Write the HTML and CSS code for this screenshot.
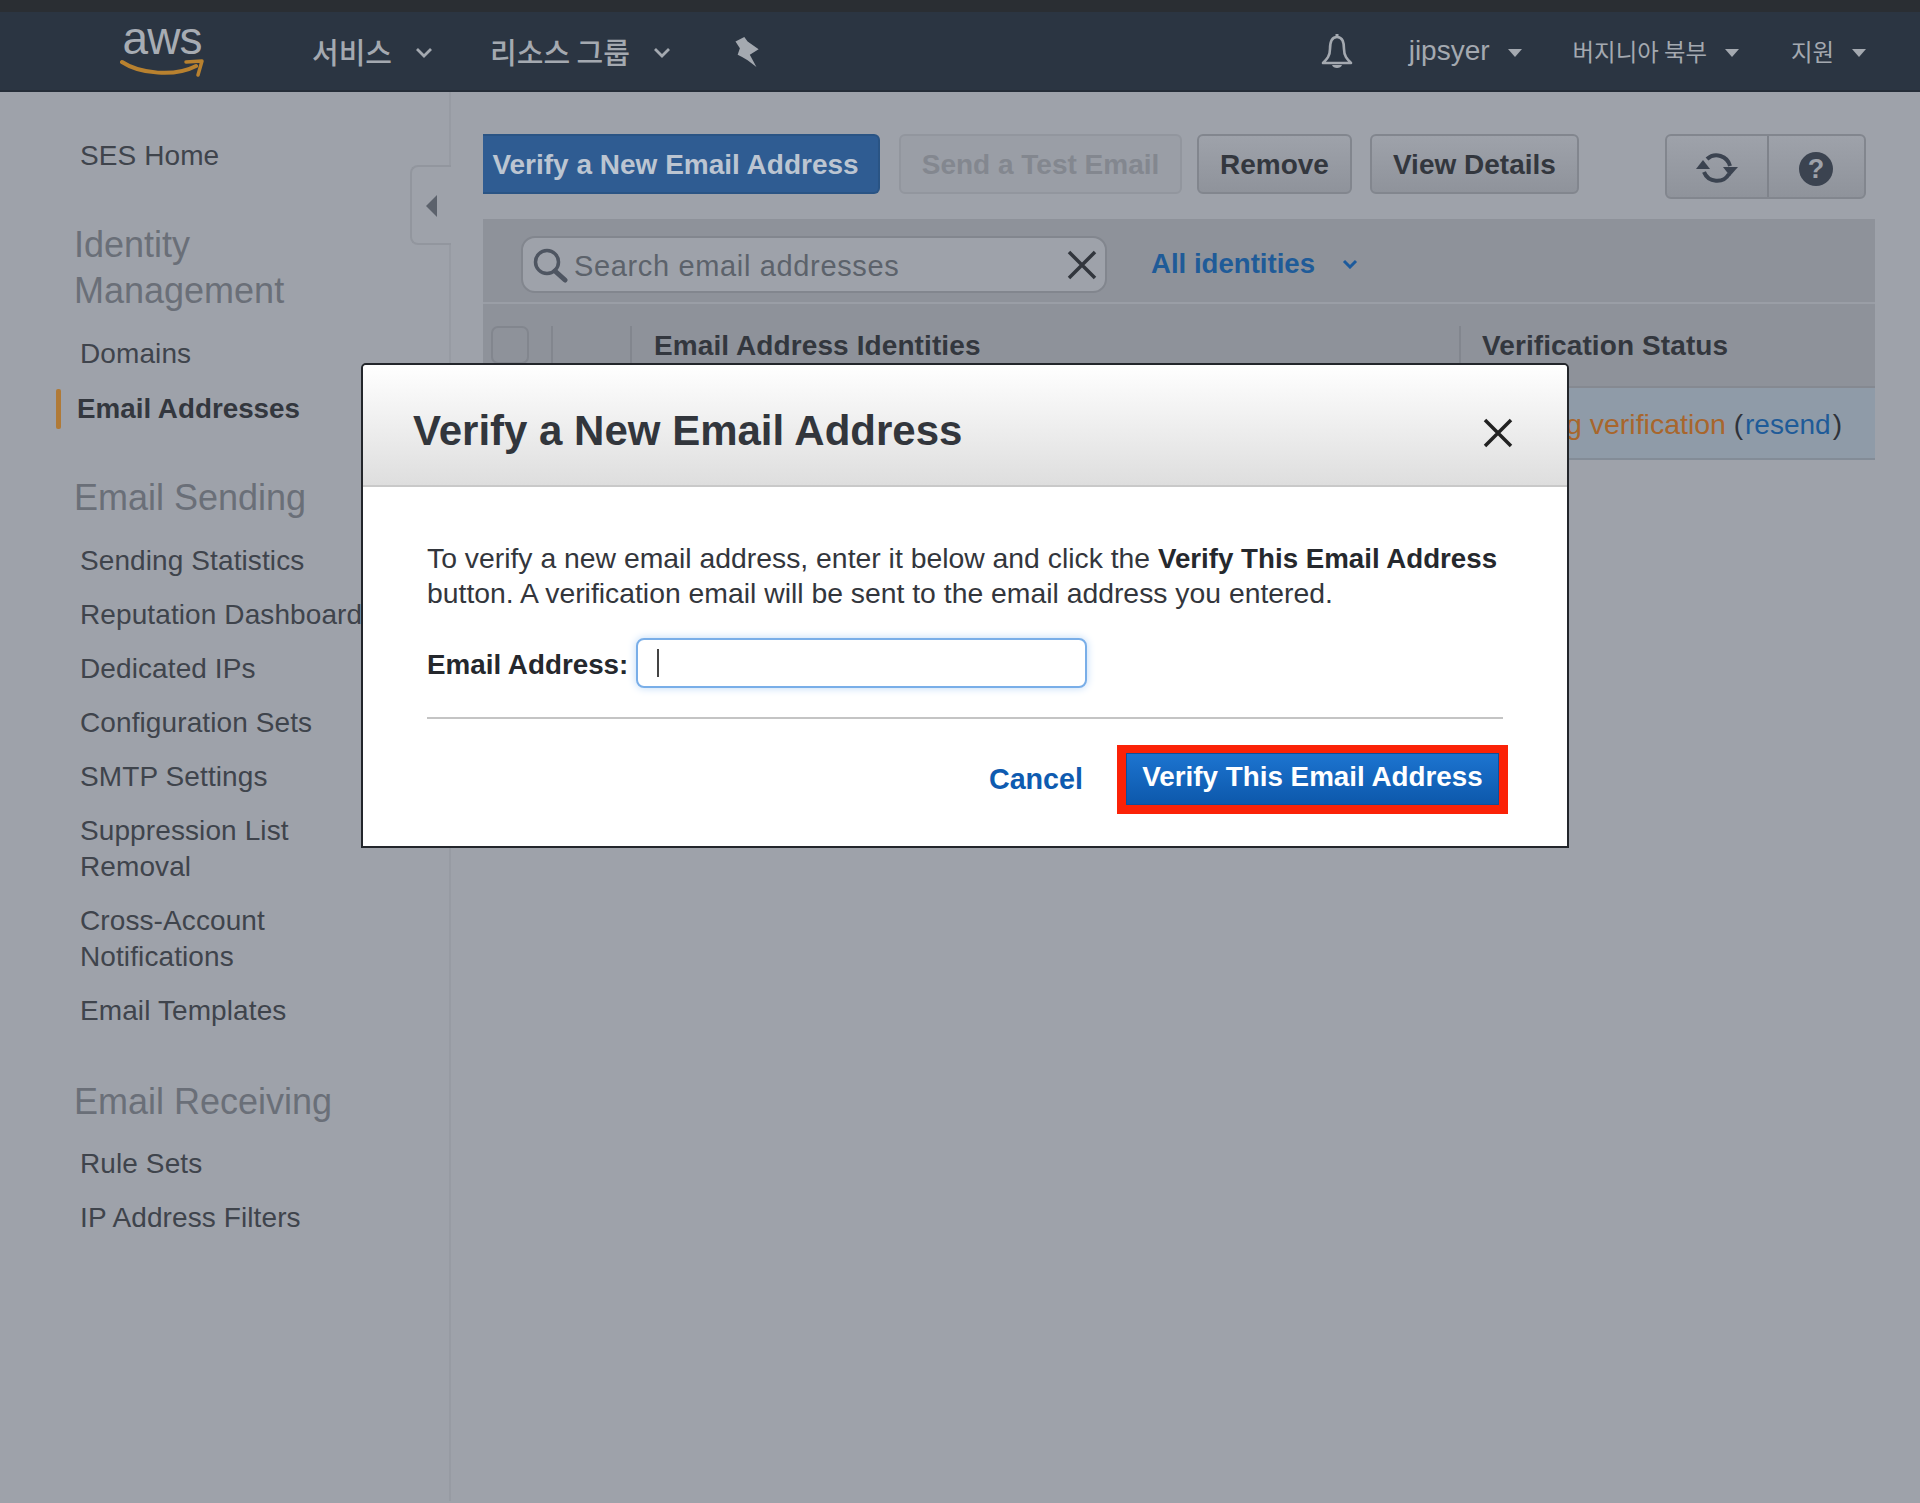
FILE: index.html
```html
<!DOCTYPE html>
<html lang="en">
<head>
<meta charset="utf-8">
<title>Verify a New Email Address</title>
<link rel="stylesheet" href="styles.css">
</head>
<body>
<div class="strip"></div>
<header class="topbar">
  <div class="logo">
    <span class="logo-text">aws</span>
    <svg class="smile" viewBox="0 0 84 20" width="84" height="20"><path d="M2 3C20 15 55 18 76 7" fill="none" stroke="#b8812f" stroke-width="4" stroke-linecap="round"/><path d="M66 3L82 2L78 16" fill="none" stroke="#b8812f" stroke-width="3.5" stroke-linejoin="round" stroke-linecap="round"/></svg>
  </div>
  <nav class="nav-left">
    <a class="nav-item nav-ko">서비스<svg class="chev" viewBox="0 0 18 11" width="18" height="11"><path d="M2 2L9 9L16 2" fill="none" stroke="#a4a9b0" stroke-width="2.8"/></svg></a>
    <a class="nav-item nav-ko">리소스 그룹<svg class="chev" viewBox="0 0 18 11" width="18" height="11"><path d="M2 2L9 9L16 2" fill="none" stroke="#a4a9b0" stroke-width="2.8"/></svg></a>
    <svg class="pin" viewBox="0 0 24 29" width="27" height="32"><path d="M2 5L10 1L13 5L23 12L15 17L21 28L13 22L8 19L4 17L6 11Z" fill="#a4a9b0"/></svg>
  </nav>
  <nav class="nav-right">
    <svg class="bell" viewBox="0 0 36 38" width="36" height="38"><path d="M18 5C12 5 11 11 11 17C11 24 8 27 4 31H32C28 27 25 24 25 17C25 11 24 5 18 5Z" fill="none" stroke="#a4a9b0" stroke-width="2.6" stroke-linejoin="round"/><path d="M18 2V5" stroke="#a4a9b0" stroke-width="3"/><path d="M13 33C14 37 22 37 23 33Z" fill="#a4a9b0"/></svg>
    <a class="nav-item nav-small nav-user">jipsyer<i class="caret"></i></a>
    <a class="nav-item nav-small nav-ko-s">버지니아 북부<i class="caret"></i></a>
    <a class="nav-item nav-small nav-ko-s">지원<i class="caret"></i></a>
  </nav>
</header>
<div class="layout">
  <aside class="sidebar">
    <a class="side-link first">SES Home</a>
    <h3 class="side-head">Identity Management</h3>
    <a class="side-link domains">Domains</a>
    <a class="side-link active">Email Addresses</a>
    <h3 class="side-head h-send">Email Sending</h3>
    <a class="side-link">Sending Statistics</a>
    <a class="side-link nowrap">Reputation Dashboard</a>
    <a class="side-link">Dedicated IPs</a>
    <a class="side-link">Configuration Sets</a>
    <a class="side-link">SMTP Settings</a>
    <a class="side-link">Suppression List Removal</a>
    <a class="side-link">Cross-Account Notifications</a>
    <a class="side-link">Email Templates</a>
    <h3 class="side-head h-recv">Email Receiving</h3>
    <a class="side-link">Rule Sets</a>
    <a class="side-link">IP Address Filters</a>
    <div class="collapse"><i class="collapse-arrow"></i></div>
  </aside>
  <main class="content">
    <div class="toolbar">
      <button class="btn btn-primary">Verify a New Email Address</button>
      <button class="btn btn-disabled">Send a Test Email</button>
      <button class="btn">Remove</button>
      <button class="btn">View Details</button>
      <div class="icon-group">
        <span class="icon-btn icon-refresh"><svg viewBox="0 0 44 38" width="44" height="38"><path d="M12 9A14 14 0 0 1 35 16M34 24A14 14 0 0 1 9 22" fill="none" stroke="#3b4350" stroke-width="4"/><path d="M1 19L8 10L15 19Z" fill="#3b4350"/><path d="M28 17L43 17L35 26Z" fill="#3b4350"/></svg></span>
        <span class="icon-btn icon-help"><svg viewBox="0 0 36 36" width="36" height="36"><circle cx="18" cy="18" r="17" fill="#3b4350"/><text x="18" y="27" class="help-mark">?</text></svg></span>
      </div>
    </div>
    <section class="panel">
      <div class="filter-row">
        <div class="search">
          <svg class="search-ico" viewBox="0 0 36 36" width="36" height="36"><circle cx="15" cy="15" r="11.500" fill="none" stroke="#4e5561" stroke-width="3.500"/><path d="M23 24L33 33" stroke="#4e5561" stroke-width="5" stroke-linecap="round"/></svg>
          <span class="search-ph">Search email addresses</span>
          <svg class="search-x" viewBox="0 0 30 30" width="30" height="30"><path d="M2 2L28 28M28 2L2 28" stroke="#32363d" stroke-width="3.500"/></svg>
        </div>
        <a class="filter-link">All identities<svg viewBox="0 0 16 10" width="16" height="10"><path d="M2 2L8 8L14 2" fill="none" stroke="#1c5a9c" stroke-width="3"/></svg></a>
      </div>
      <div class="thead">
        <span class="check"></span>
        <span class="th-blank"></span>
        <span class="th th-email">Email Address Identities</span>
        <span class="th th-status">Verification Status</span>
      </div>
      <div class="trow">
        <span class="status"><span class="pending">pending verification</span> (<a class="resend">resend</a>)</span>
      </div>
    </section>
  </main>
</div>
<div class="modal">
  <div class="modal-head">
    <h2 class="modal-title">Verify a New Email Address</h2>
    <svg class="modal-x" viewBox="0 0 30 30" width="30" height="30"><path d="M2 2L28 28M28 2L2 28" stroke="#222" stroke-width="3.500"/></svg>
  </div>
  <div class="modal-body">
    <p class="modal-text">To verify a new email address, enter it below and click the <b>Verify This Email Address</b> button. A verification email will be sent to the email address you entered.</p>
    <div class="field">
      <label class="field-label">Email Address:</label>
      <div class="field-input"><i class="cursor"></i></div>
    </div>
    <div class="modal-foot">
      <a class="cancel">Cancel</a>
      <span class="highlight"><button class="verify">Verify This Email Address</button></span>
    </div>
  </div>
</div>
</body>
</html>
```
FILE: styles.css
```css
* { box-sizing: border-box; }
html, body { margin: 0; padding: 0; }
body {
  width: 1920px;
  height: 1503px;
  overflow: hidden;
  position: relative;
  background: #9ea2aa;
  font-family: "Liberation Sans", Arial, sans-serif;
  color: #33373e;
}
.strip { height: 12px; background: #2a2e33; }
.topbar {
  height: 80px;
  background: #2b3542;
  border-bottom: 2px solid #252d38;
  display: flex;
  align-items: center;
  justify-content: space-between;
  padding: 0 54px 0 120px;
  color: #a4a9b0;
}
.logo { width: 84px; height: 62px; display: flex; flex-direction: column; align-items: center; }
.logo-text { font-size: 46px; line-height: 36px; letter-spacing: -1px; color: #a7acb3; }
.smile { margin-top: 3px; }
.nav-left { display: flex; align-items: center; margin-left: 108px; flex: 1; }
.nav-right { display: flex; align-items: center; }
.nav-item { display: flex; align-items: center; font-weight: 400; white-space: nowrap; }
.nav-ko { font-family: "Noto Sans CJK KR", sans-serif; font-size: 29px; font-weight: 500; margin-right: 57px; line-height: 1; }
.chev { margin-left: 23px; margin-top: 3px; }
.pin { margin-left: 5px; margin-top: 2px; }
.bell { margin-right: 54px; }
.nav-small { font-size: 28px; }
.nav-user { margin-right: 51px; }
.nav-ko-s { font-family: "Noto Sans CJK KR", sans-serif; font-size: 23.4px; margin-right: 52px; }
.nav-ko-s:last-child { margin-right: 0; }
.caret { width: 0; height: 0; border-left: 7px solid transparent; border-right: 7px solid transparent; border-top: 8px solid #a4a9b0; margin-left: 18px; margin-top: 3px; }
.layout { display: flex; height: 1409px; }
.sidebar {
  width: 451px;
  flex: none;
  border-right: 2px solid #979ba3;
  padding: 46px 0 0 80px;
  position: relative;
  display: flex;
  flex-direction: column;
  align-items: flex-start;
}
.side-link { font-size: 28px; letter-spacing: .1px; line-height: 36px; color: #3f444c; margin-bottom: 18px; width: 240px; }
.side-link.first { margin-bottom: 0; }
.side-link.domains { margin-bottom: 19px; }
.side-link.nowrap { white-space: nowrap; width: auto; }
.side-link.active { font-size: 27.8px; font-weight: 700; letter-spacing: 0; margin-left: -3px; color: #33373e; position: relative; white-space: nowrap; width: auto; }
.side-link.active::before { content: ""; position: absolute; left: -21px; top: -2px; width: 5px; height: 40px; background: #b07a37; border-radius: 2px; }
.side-head { font-size: 36px; line-height: 46px; font-weight: 400; color: #6a6f78; margin: 48px 0 22px -6px; width: 290px; }
.h-send { margin: 30px 0 22px -6px; }
.h-recv { margin: 32px 0 21px -6px; }
.collapse {
  position: absolute;
  left: 410px;
  top: 73px;
  width: 41px;
  height: 80px;
  background: #9ea2aa;
  border: 2px solid #92969e;
  border-right: none;
  border-radius: 8px 0 0 8px;
  display: flex;
  align-items: center;
  justify-content: center;
}
.collapse-arrow { width: 0; height: 0; border-top: 11px solid transparent; border-bottom: 11px solid transparent; border-right: 11px solid #5c626c; margin-top: 2px; }
.content { width: 1392px; margin-left: 32px; padding-top: 42px; }
.toolbar { display: flex; align-items: flex-start; height: 85px; }
.btn {
  height: 60px;
  border: 2px solid #82868e;
  border-radius: 6px;
  background: linear-gradient(#9ea2aa, #8f939b);
  font-family: "Liberation Sans", Arial, sans-serif;
  font-size: 28px;
  font-weight: 700;
  color: #33373e;
  padding: 1px 21px 0;
  margin-right: 18px;
  white-space: nowrap;
}
.btn-primary { width: 397px; padding: 1px 10px 0 0; margin-right: 19px; background: #2f5c92; border-color: #2a5484; border-left: 0; color: #bcc5d1; border-radius: 0 6px 6px 0; }
.btn-disabled { width: 283px; padding: 1px 0 0; margin-right: 15px; color: #83878f; background: #9a9ea6; border-color: #92969e; }
.icon-group { display: flex; height: 65px; margin-left: 68px; border: 2px solid #82868e; border-radius: 6px; background: linear-gradient(#9ea2aa, #8f939b); }
.icon-btn { display: flex; align-items: center; justify-content: center; padding-top: 4px; }
.icon-refresh { width: 102px; border-right: 2px solid #7f838b; }
.icon-help { width: 95px; }
.help-mark { font: 700 27px "Liberation Sans", Arial, sans-serif; fill: #9ea2aa; text-anchor: middle; }
.panel { background: #8e929a; }
.filter-row {
  height: 85px;
  display: flex;
  align-items: center;
  padding-left: 38px;
  border-bottom: 2px solid #9a9ea6;
}
.search {
  width: 586px;
  height: 57px;
  margin-top: 8px;
  border: 2px solid #82868e;
  border-radius: 14px;
  background: #9ea2aa;
  display: flex;
  align-items: center;
  padding: 0 8px 0 9px;
}
.search-ico { flex: none; }
.search-ph { font-size: 29px; color: #5c626b; margin-left: 6px; padding-top: 4px; flex: 1; letter-spacing: .65px; white-space: nowrap; }
.search-x { flex: none; width: 30px; }
.filter-link { display: flex; align-items: center; margin-left: 44px; font-size: 27.6px; font-weight: 700; color: #1f5b98; margin-top: 6px; }
.filter-link svg { margin-left: 27px; }
.thead { height: 84px; display: flex; align-items: center; position: relative; border-bottom: 2px solid #858991; }
.check { width: 38px; height: 38px; margin-left: 8px; border: 2px solid #82868e; border-radius: 7px; background: #8e929a; }
.th-blank { width: 81px; height: 38px; margin-left: 22px; border-left: 2px solid #82868e; border-right: 2px solid #82868e; }
.th { font-size: 28px; letter-spacing: .1px; font-weight: 700; color: #33373e; line-height: 38px; height: 38px; padding-top: 1px; white-space: nowrap; }
.th-email { width: 827px; padding-left: 22px; }
.th-status { border-left: 2px solid #82868e; padding-left: 21px; }
.trow { height: 72px; background: #8f9ba8; border-bottom: 2px solid #838c97; display: flex; align-items: center; justify-content: flex-end; padding: 2px 33px 0 0; font-size: 28px; color: #2e323a; }
.status { white-space: nowrap; }
.pending { color: #a8662c; font-size: 28.5px; }
.resend { color: #1f5b98; margin: 0 2px; }
.modal {
  position: absolute;
  left: 361px;
  top: 363px;
  width: 1208px;
  height: 485px;
  background: #fff;
  border: 2px solid #23262b;
  border-radius: 5px 5px 0 0;
}
.modal-head {
  height: 122px;
  background: linear-gradient(#fff, #dedede);
  border-bottom: 2px solid #c9c9c9;
  display: flex;
  align-items: center;
  justify-content: space-between;
  padding: 0 54px 0 50px;
  border-radius: 4px 4px 0 0;
}
.modal-title { margin: 12px 0 0; font-size: 42px; font-weight: 700; color: #32363c; }
.modal-x { width: 30px; height: 30px; margin-top: 16px; }
.modal-body { padding: 54px 64px 0; }
.modal-text { margin: 0; font-size: 28.35px; line-height: 34px; color: #33363c; width: 1090px; }
.modal-text b { color: #25282d; font-size: 27.7px; }
.field { display: flex; align-items: center; margin-top: 28px; }
.field-label { font-size: 27.8px; font-weight: 700; color: #25282d; width: 209px; margin-top: 3px; white-space: nowrap; }
.field-input {
  width: 451px;
  height: 50px;
  border: 2px solid #79aee8;
  border-radius: 8px;
  background: #fff;
  box-shadow: 0 0 9px #bcd8f7;
  display: flex;
  align-items: center;
  padding-left: 19px;
}
.cursor { width: 2px; height: 28px; background: #444; }
.modal-foot {
  margin-top: 29px;
  width: 1076px;
  border-top: 2px solid #c4c4c4;
  display: flex;
  align-items: center;
  justify-content: flex-end;
  padding-top: 26px;
}
.cancel { font-size: 28.7px; font-weight: 700; color: #0e5bb0; margin-right: 34px; }
.highlight { display: block; background: #fb2207; padding: 8px 9px 9px 9px; margin-right: -5px; }
.verify {
  display: block;
  width: 373px;
  height: 52px;
  background: linear-gradient(#1c74d0, #0d58ab);
  border: 1px solid #0d4f9b;
  color: #fff;
  font-family: "Liberation Sans", Arial, sans-serif;
  font-size: 27.8px;
  font-weight: 700;
  padding: 0 0 4px;
}
```
